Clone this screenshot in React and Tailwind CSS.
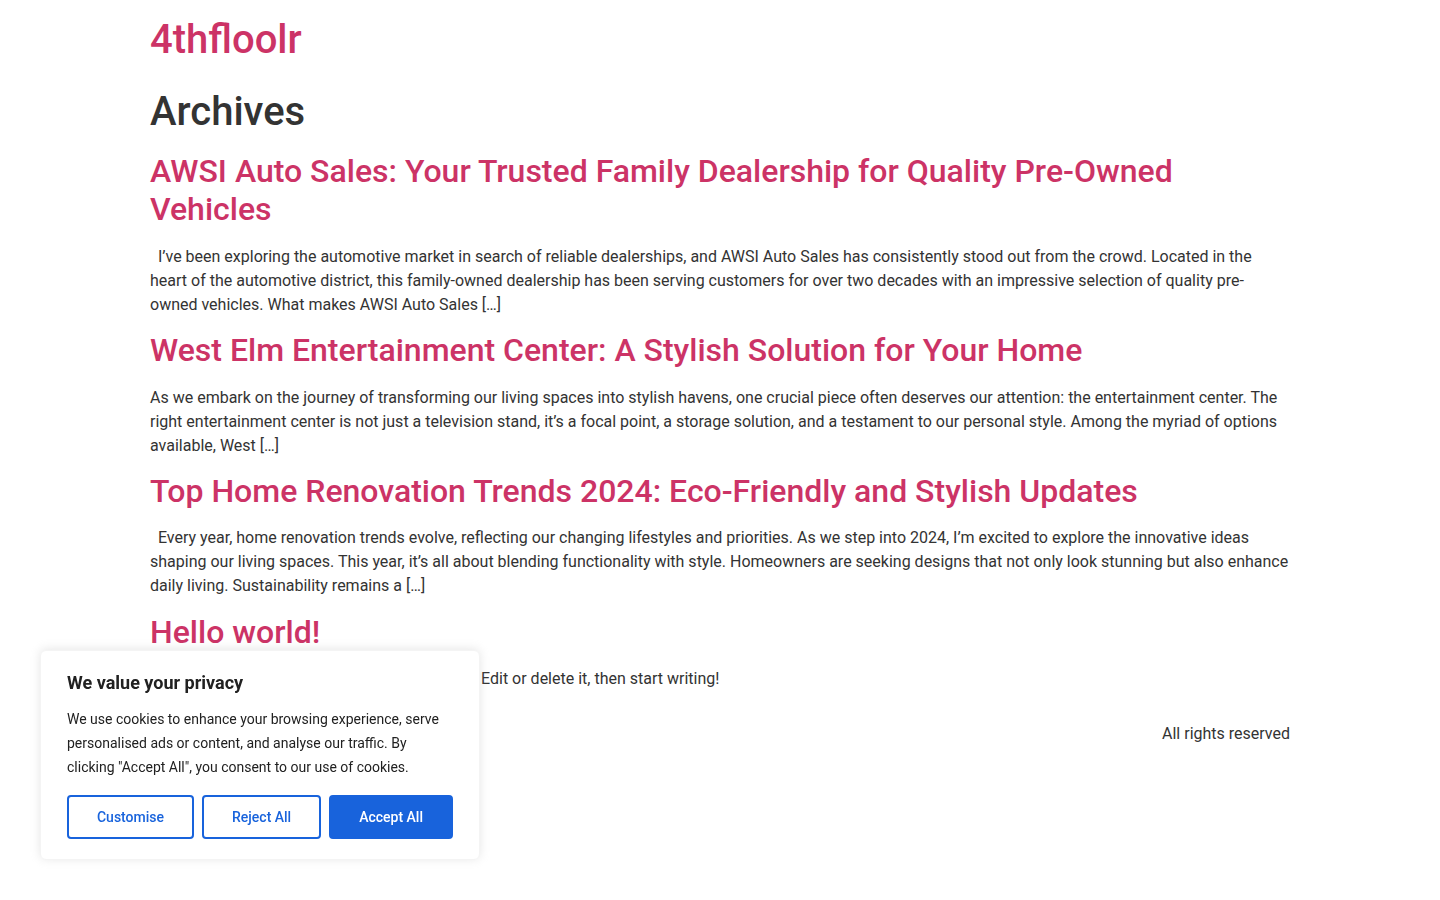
import React from "react";

const posts = [
    {
        title: "AWSI Auto Sales: Your Trusted Family Dealership for Quality Pre-Owned Vehicles",
        excerpt:
            "\u00a0 I\u2019ve been exploring the automotive market in search of reliable dealerships, and AWSI Auto Sales has consistently stood out from the crowd. Located in the heart of the automotive district, this family-owned dealership has been serving customers for over two decades with an impressive selection of quality pre-owned vehicles. What makes AWSI Auto Sales [\u2026]",
    },
    {
        title: "West Elm Entertainment Center: A Stylish Solution for Your Home",
        excerpt:
            "As we embark on the journey of transforming our living spaces into stylish havens, one crucial piece often deserves our attention: the entertainment center. The right entertainment center is not just a television stand, it\u2019s a focal point, a storage solution, and a testament to our personal style. Among the myriad of options available, West [\u2026]",
    },
    {
        title: "Top Home Renovation Trends 2024: Eco-Friendly and Stylish Updates",
        excerpt:
            "\u00a0 Every year, home renovation trends evolve, reflecting our changing lifestyles and priorities. As we step into 2024, I\u2019m excited to explore the innovative ideas shaping our living spaces. This year, it\u2019s all about blending functionality with style. Homeowners are seeking designs that not only look stunning but also enhance daily living. Sustainability remains a [\u2026]",
    },
    {
        title: "Hello world!",
        excerpt:
            "Welcome to WordPress. This is your first post. Edit or delete it, then start writing!",
    },
];

export default function App() {
    return (
        <div className="min-h-screen bg-white font-['Roboto',sans-serif] text-[#333] text-base leading-6">
            {/* Header */}
            <header className="max-w-[1140px] mx-auto pt-4 pb-6">
                <a href="#" className="block text-[40px] leading-[48px] font-medium text-[#c36]">
                    4thfloolr
                </a>
            </header>

            {/* Archive list */}
            <main className="max-w-[1140px] mx-auto">
                <h1 className="text-[40px] leading-[48px] font-medium text-[#333] mb-4">
                    Archives
                </h1>
                {posts.map((post) => (
                    <article key={post.title}>
                        <h2 className="text-[32px] leading-[1.2] font-medium text-[#c36] mb-4">
                            <a href="#">{post.title}</a>
                        </h2>
                        <p className="mb-[0.9rem]">{post.excerpt}</p>
                    </article>
                ))}
            </main>

            {/* Footer */}
            <footer className="max-w-[1140px] mx-auto pt-4 pb-4 flex justify-end">
                <p>All rights reserved</p>
            </footer>

            {/* Cookie consent */}
            <div className="fixed left-10 bottom-10 w-[440px] bg-white border border-[#f4f4f4] rounded-md shadow-[0_-1px_10px_0_rgba(172,171,171,0.3)] px-[26px] py-5 text-[#212121]">
                <p className="text-lg leading-6 font-bold mb-3">We value your privacy</p>
                <p className="text-sm leading-6">
                    We use cookies to enhance your browsing experience, serve personalised ads or content, and analyse our traffic. By clicking "Accept All", you consent to our use of cookies.
                </p>
                <div className="flex gap-2 mt-4">
                    <button className="flex-auto border-2 border-[#1863dc] rounded-sm py-2 text-sm leading-6 font-medium text-[#1863dc] bg-white">
                        Customise
                    </button>
                    <button className="flex-auto border-2 border-[#1863dc] rounded-sm py-2 text-sm leading-6 font-medium text-[#1863dc] bg-white">
                        Reject All
                    </button>
                    <button className="flex-auto border-2 border-[#1863dc] rounded-sm py-2 text-sm leading-6 font-medium text-white bg-[#1863dc]">
                        Accept All
                    </button>
                </div>
            </div>
        </div>
    );
}
